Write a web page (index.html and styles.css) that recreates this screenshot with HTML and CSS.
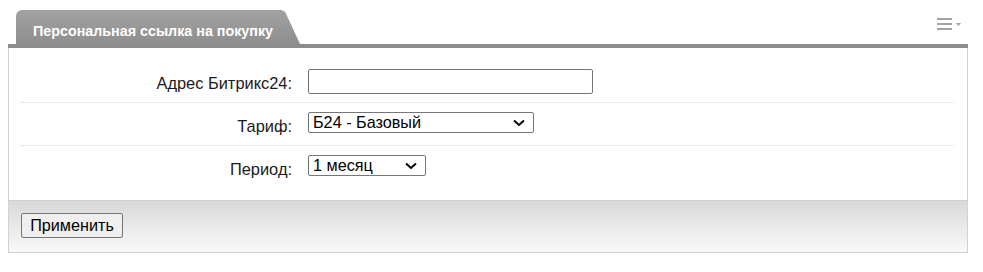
FILE: index.html
```html
<!DOCTYPE html>
<html lang="ru">
<head>
<meta charset="utf-8">
<title>Персональная ссылка на покупку</title>
<link rel="stylesheet" href="styles.css">
</head>
<body>
<div class="widget">
  <div class="head">
    <div class="tab">Персональная ссылка на покупку</div>
    <div class="menu">
      <svg width="26" height="14" viewBox="0 0 26 14">
        <rect x="0" y="1" width="15" height="2" fill="#a3a3a3"/>
        <rect x="0" y="6" width="15" height="2" fill="#a3a3a3"/>
        <rect x="0" y="11" width="15" height="2" fill="#a3a3a3"/>
        <polygon points="19,6 24,6 21.5,9" fill="#a3a3a3"/>
      </svg>
    </div>
  </div>
  <div class="bar"></div>
  <div class="box">
    <div class="rows">
      <div class="row">
        <label class="lbl">Адрес Битрикс24:</label>
        <input class="inp" type="text">
      </div>
      <div class="row">
        <label class="lbl">Тариф:</label>
        <span class="selwrap">
          <select class="sel sel-tariff"><option>Б24 - Базовый</option></select>
          <svg class="chev" width="12" height="8" viewBox="0 0 12 8"><polyline points="1,1.5 6,6 11,1.5" fill="none" stroke="#000" stroke-width="2"/></svg>
        </span>
      </div>
      <div class="row last">
        <label class="lbl">Период:</label>
        <span class="selwrap">
          <select class="sel sel-period"><option>1 месяц</option></select>
          <svg class="chev" width="12" height="8" viewBox="0 0 12 8"><polyline points="1,1.5 6,6 11,1.5" fill="none" stroke="#000" stroke-width="2"/></svg>
        </span>
      </div>
    </div>
    <div class="foot">
      <button class="btn" type="button">Применить</button>
    </div>
  </div>
</div>
</body>
</html>
```
FILE: styles.css
```css
html, body {
  margin: 0;
  padding: 0;
  background: #fff;
}
body {
  padding: 8px;
  font-family: "Liberation Sans", Arial, sans-serif;
}
.widget {
  width: 960px;
}
.head {
  display: flex;
  align-items: flex-end;
  justify-content: space-between;
  padding: 2px 0 0 8px;
  height: 34px;
}
.tab {
  width: 284px;
  height: 34px;
  box-sizing: border-box;
  padding: 13px 0 0 17px;
  background: linear-gradient(#a2a2a2, #8e8e8e);
  color: #fff;
  font-weight: bold;
  font-size: 14.3px;
  line-height: 16px;
  border-top-left-radius: 6px;
  clip-path: polygon(0 0, 93.5% 0, 94.8% 6%, 100% 100%, 0 100%);
}
.menu {
  align-self: flex-start;
  padding: 7px 5px 0 0;
}
.menu svg {
  display: block;
}
.bar {
  height: 4px;
  background: #8c8c8c;
}
.box {
  border: 1px solid #d2d2d2;
  border-top: none;
}
.rows {
  padding: 12px 13px 12px 11px;
}
.row {
  display: grid;
  grid-template-columns: 272px auto;
  column-gap: 16px;
  align-items: center;
  justify-items: start;
  height: 42px;
  border-bottom: 1px dotted #d6d6d6;
}
.row.last {
  border-bottom: none;
}
.lbl {
  justify-self: end;
  font-size: 16.4px;
  color: #1a1a1a;
  padding-top: 4px;
}
.inp {
  width: 285px;
  height: 25px;
  box-sizing: border-box;
  border: 1px solid #767676;
  border-radius: 2px;
  margin: 0;
  font-family: "Liberation Sans", Arial, sans-serif;
}
.selwrap {
  position: relative;
  display: block;
  margin-bottom: 4px;
}
.sel {
  display: block;
  appearance: none;
  -webkit-appearance: none;
  height: 21px;
  box-sizing: border-box;
  border: 1px solid #767676;
  border-radius: 2px;
  margin: 0;
  font-family: "Liberation Sans", Arial, sans-serif;
  font-size: 16.2px;
  line-height: 19px;
  color: #000;
  background: #fff;
  padding: 0 0 0 4px;
}
.chev {
  position: absolute;
  right: 9px;
  top: 7px;
  pointer-events: none;
}
.sel-tariff {
  width: 226px;
}
.sel-period {
  width: 118px;
}
.foot {
  border-top: 1px solid #cfcfcf;
  background: linear-gradient(#d9d9d9, #f9f9f9);
  padding: 12px 12px 14px;
}
.btn {
  display: block;
  width: 102px;
  height: 25px;
  margin: 0;
  border: 1px solid #767676;
  border-radius: 2px;
  background: #efefef;
  font-family: "Liberation Sans", Arial, sans-serif;
  font-size: 16.2px;
  color: #000;
  padding: 0;
}
```
